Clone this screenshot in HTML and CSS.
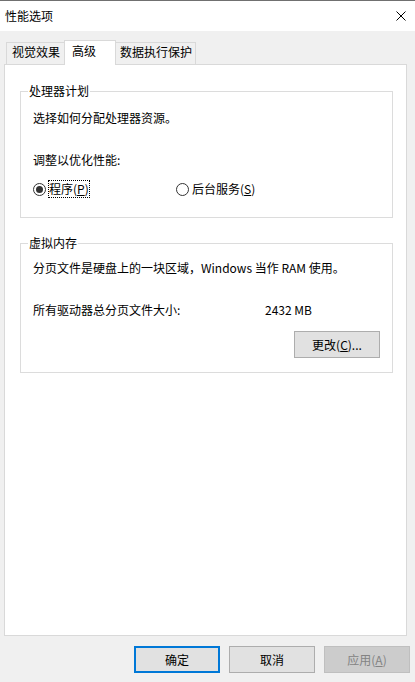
FILE: index.html
```html
<!DOCTYPE html>
<html lang="zh-CN">
<head>
<meta charset="utf-8">
<title>性能选项</title>
<link rel="stylesheet" href="styles.css">
</head>
<body>
<div class="window">
  <header class="titlebar">
    <span class="title">性能选项</span>
    <span class="close"><svg width="10" height="10" viewBox="0 0 10 10"><path d="M0.5 0.5L9.5 9.5M9.5 0.5L0.5 9.5" stroke="#000" stroke-width="1" fill="none"/></svg></span>
  </header>
  <main class="client">
    <div class="tabs">
      <div class="tab first">视觉效果</div>
      <div class="tab active">高级</div>
      <div class="tab last">数据执行保护</div>
    </div>
    <section class="panel">
      <fieldset class="group g1">
        <legend>处理器计划</legend>
        <p class="line l1">选择如何分配处理器资源。</p>
        <p class="line l2">调整以优化性能:</p>
        <div class="radios">
          <label class="radio first-radio"><span class="dot on"></span><span class="rlabel focus">程序(<u>P</u>)</span></label>
          <label class="radio"><span class="dot"></span><span class="rlabel">后台服务(<u>S</u>)</span></label>
        </div>
      </fieldset>
      <fieldset class="group g2">
        <legend>虚拟内存</legend>
        <p class="line v1">分页文件是硬盘上的一块区域，Windows 当作 RAM 使用。</p>
        <div class="line sizerow"><span class="sizelabel">所有驱动器总分页文件大小:</span><span class="sizeval">2432 MB</span></div>
        <div class="btnrow"><button class="btn">更改(<u>C</u>)...</button></div>
      </fieldset>
    </section>
    <footer class="footer">
      <button class="btn default">确定</button>
      <button class="btn">取消</button>
      <button class="btn disabled">应用(<u>A</u>)</button>
    </footer>
  </main>
</div>
</body>
</html>
```

FILE: styles.css
```css
* { box-sizing: border-box; }
html, body { margin: 0; padding: 0; background: #f0f0f0; }
body {
  font-family: "Noto Sans CJK SC", "Noto Sans", sans-serif;
  font-size: 12px;
  line-height: 16px;
  color: #000;
}
.window {
  width: 415px;
  height: 682px;
  display: flex;
  flex-direction: column;
  overflow: hidden;
}
.titlebar {
  height: 31px;
  flex: none;
  border-top: 1px solid #707070;
  background: #fff;
  display: flex;
  align-items: center;
  justify-content: space-between;
  padding: 0 9px 0 5px;
}
.title { line-height: 16px; }
.close { display: flex; width: 10px; height: 10px; }
.client {
  flex: 1;
  background: #f0f0f0;
  padding: 9px 8px 0 4px;
  display: flex;
  flex-direction: column;
}
.tabs {
  height: 24px;
  display: flex;
  align-items: flex-end;
  padding-left: 2px;
}
.tab {
  height: 22px;
  border: 1px solid #d9d9d9;
  border-bottom: none;
  background: #f0f0f0;
  padding: 1px 4px 0 5px;
  white-space: nowrap;
  flex: none;
}
.tab.first { border-right: none; width: 58px; }
.tab.last { border-left: none; padding: 1px 2px 0 4px; width: 80px; }
.tab.active {
  position: relative;
  z-index: 1;
  height: 25px;
  margin-bottom: -1px;
  background: #fff;
  padding: 2px 19px 0 7px;
  width: 52px;
}
.panel {
  width: 403px;
  height: 572px;
  flex: none;
  background: #fff;
  border: 1px solid #d9d9d9;
  padding: 0 13px 0 15px;
  display: flex;
  flex-direction: column;
}
.group {
  margin: 0;
  padding: 0;
  border: 1px solid #dcdcdc;
  min-width: 0;
}
.group legend {
  margin-left: 7px;
  padding: 0 1px;
  line-height: 16px;
}
.g1 { margin-top: 18px; padding-bottom: 19px; }
.g2 { margin-top: 17px; padding-bottom: 14px; }
.line { margin: 0; padding-left: 12px; height: 16px; white-space: nowrap; }
.l1 { margin-top: 11px; }
.l2 { margin-top: 26px; }
.v1 { margin-top: 9px; }
.sizerow { margin-top: 26px; display: flex; }
.sizelabel { width: 232px; flex: none; }
.radios {
  margin-top: 12px;
  height: 18px;
  padding-left: 12px;
  display: flex;
  align-items: center;
}
.radio { display: flex; align-items: center; }
.first-radio { width: 143px; flex: none; }
.dot {
  width: 13px;
  height: 13px;
  border: 1px solid #333;
  border-radius: 50%;
  background: #fff;
  margin-right: 2px;
  display: flex;
  align-items: center;
  justify-content: center;
}
.dot.on::after {
  content: "";
  width: 7px;
  height: 7px;
  border-radius: 50%;
  background: #333;
}
.rlabel {
  border: 1px solid transparent;
  line-height: 16px;
  padding: 0;
}
.rlabel.focus { border: 1px dotted #000; }
u { text-decoration: underline; text-underline-offset: 1px; }
.btnrow {
  margin-top: 13px;
  display: flex;
  justify-content: flex-end;
  padding-right: 12px;
}
.btn {
  width: 86px;
  height: 27px;
  flex: none;
  margin: 0;
  padding: 0;
  font: inherit;
  line-height: 16px;
  color: #000;
  background: #e1e1e1;
  border: 1px solid #adadad;
  border-radius: 0;
}
.footer {
  margin-top: 10px;
  display: flex;
  gap: 9px;
  padding-left: 130px;
}
.btn.default { border: 2px solid #0078d7; }
.btn.disabled { background: #cccccc; border-color: #bfbfbf; color: #838383; }
```
